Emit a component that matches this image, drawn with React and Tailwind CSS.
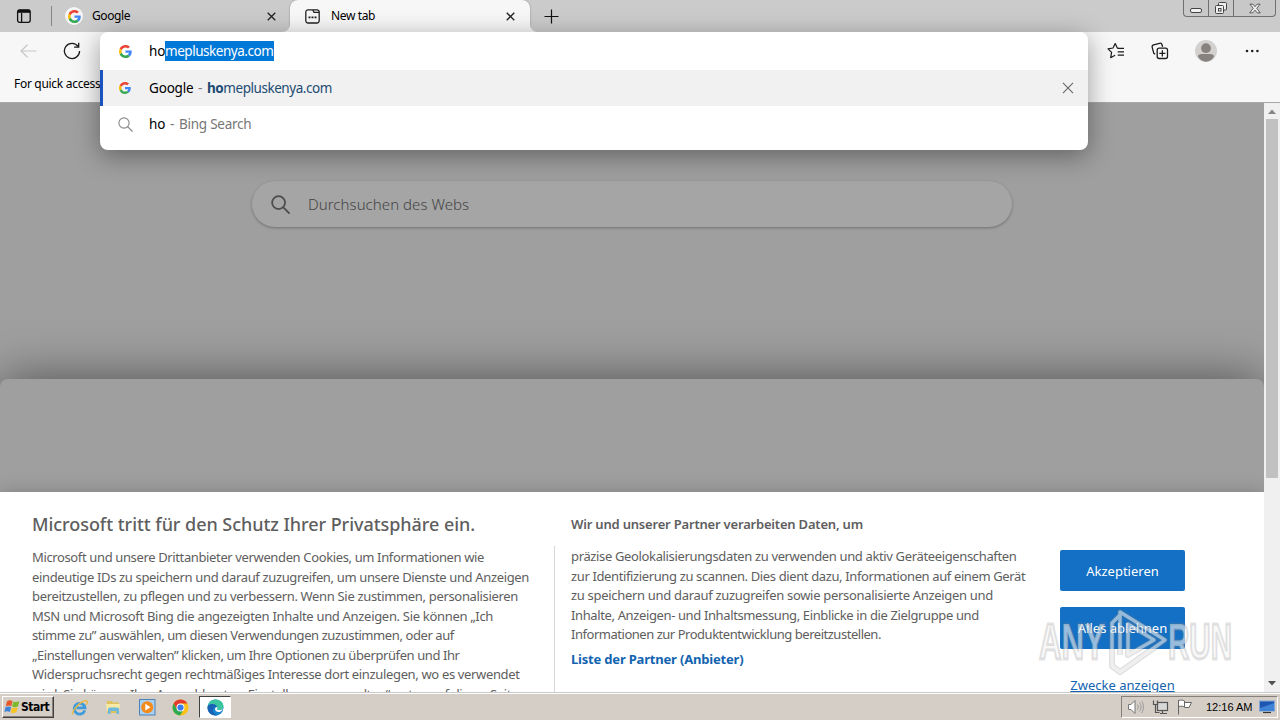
const LEFT_LINES = [
  ['Microsoft und unsere Drittanbieter verwenden Cookies, um Informationen wie', 'tracking-[-0.369px]'],
  ['eindeutige IDs zu speichern und darauf zuzugreifen, um unsere Dienste und Anzeigen', 'tracking-[-0.351px]'],
  ['bereitzustellen, zu pflegen und zu verbessern. Wenn Sie zustimmen, personalisieren', 'tracking-[-0.332px]'],
  ['MSN und Microsoft Bing die angezeigten Inhalte und Anzeigen. Sie können „Ich', 'tracking-[-0.314px]'],
  ['stimme zu” auswählen, um diesen Verwendungen zuzustimmen, oder auf', 'tracking-[-0.408px]'],
  ['„Einstellungen verwalten” klicken, um Ihre Optionen zu überprüfen und Ihr', 'tracking-[-0.415px]'],
  ['Widerspruchsrecht gegen rechtmäßiges Interesse dort einzulegen, wo es verwendet', 'tracking-[-0.346px]'],
  ['wird. Sie können Ihre Auswahl unter „Einstellungen verwalten“ unten auf dieser Seite', 'tracking-[-0.38px]'],
];

const RIGHT_LINES = [
  ['präzise Geolokalisierungsdaten zu verwenden und aktiv Geräteeigenschaften', 'tracking-[-0.355px]'],
  ['zur Identifizierung zu scannen. Dies dient dazu, Informationen auf einem Gerät', 'tracking-[-0.375px]'],
  ['zu speichern und darauf zuzugreifen sowie personalisierte Anzeigen und', 'tracking-[-0.31px]'],
  ['Inhalte, Anzeigen- und Inhaltsmessung, Einblicke in die Zielgruppe und', 'tracking-[-0.375px]'],
  ['Informationen zur Produktentwicklung bereitzustellen.', 'tracking-[-0.474px]'],
];

function GoogleIcon({ size = 14 }) {
  return (
    <svg width={size} height={size} viewBox="0 0 48 48">
      <path fill="#EA4335" d="M24 9.5c3.54 0 6.71 1.22 9.21 3.6l6.85-6.85C35.9 2.38 30.47 0 24 0 14.62 0 6.51 5.38 2.56 13.22l7.98 6.19C12.43 13.72 17.74 9.5 24 9.5z" />
      <path fill="#4285F4" d="M46.98 24.55c0-1.57-.15-3.09-.38-4.55H24v9.02h12.94c-.58 2.96-2.26 5.48-4.78 7.18l7.73 6c4.51-4.18 7.09-10.36 7.09-17.65z" />
      <path fill="#FBBC05" d="M10.53 28.59c-.48-1.45-.76-2.99-.76-4.59s.27-3.14.76-4.59l-7.98-6.19C.92 16.46 0 20.12 0 24c0 3.88.92 7.54 2.56 10.78l7.97-6.19z" />
      <path fill="#34A853" d="M24 48c6.48 0 11.93-2.13 15.89-5.81l-7.73-6c-2.15 1.45-4.92 2.3-8.16 2.3-6.26 0-11.57-4.22-13.47-9.91l-7.98 6.19C6.51 42.62 14.62 48 24 48z" />
    </svg>
  );
}

function CloseIcon({ size = 9, color = '#222', width = 1.5 }) {
  return (
    <svg width={size} height={size} viewBox="0 0 10 10" fill="none" stroke={color} strokeWidth={width}>
      <path d="M.8.8l8.4 8.4M9.2.8L.8 9.2" />
    </svg>
  );
}

function SearchIcon({ size, color, width }) {
  return (
    <svg width={size} height={size} viewBox="0 0 20 20" fill="none" stroke={color} strokeWidth={width} strokeLinecap="round">
      <circle cx="8" cy="8" r="6.8" />
      <path d="M13 13l6 6" />
    </svg>
  );
}

function TabStrip() {
  return (
    <div className="flex h-8 shrink-0 bg-[#cbcbcb] text-[12px] text-black">
      <div className="flex w-[51px] items-center pl-4">
        <svg width="16" height="16" viewBox="0 0 16 16" fill="none" stroke="#111" strokeWidth="1.3">
          <rect x="1.6" y="1.9" width="12.6" height="12.4" rx="2" />
          <path d="M1.6 4h12.6M5.6 5v9" />
          <path d="M2 3h12" strokeWidth="2.4" />
        </svg>
      </div>
      <div className="mt-1.5 h-5 w-px bg-[#858585]" />
      <div className="flex w-[238px] items-center pl-[13px]">
        <span className="flex size-[18px] items-center justify-center rounded-full bg-white/80"><GoogleIcon size={13} /></span>
        <span className="ml-[9px] w-[175px] tracking-[-0.4px] whitespace-nowrap">Google</span>
        <CloseIcon />
      </div>
      <div className="relative flex w-60 items-center rounded-t-lg bg-[#f7f7f7] pl-[15px] shadow-[0_0_2px_rgba(0,0,0,0.35)]">
        <svg className="absolute bottom-0 -left-2" width="8" height="8" viewBox="0 0 8 8">
          <path d="M8 0v8H0c4.500 0 8-3.500 8-8z" fill="#f7f7f7" />
        </svg>
        <svg className="absolute -right-2 bottom-0" width="8" height="8" viewBox="0 0 8 8">
          <path d="M0 0v8h8C3.500 8 0 4.500 0 0z" fill="#f7f7f7" />
        </svg>
        <svg width="15" height="15" viewBox="0 0 15 15" fill="none" stroke="#222" strokeWidth="1.3">
          <path d="M3.200.8h4.500l1.300 2.600h5.200v8.400a2.200 2.200 0 0 1-2.200 2.200H3a2.200 2.200 0 0 1-2.200-2.200V3A2.200 2.200 0 0 1 3.200.8zM7.700.8H12a2.200 2.200 0 0 1 2.200 2.600" />
          <path d="M3.500 8.300h2M6.500 8.300h2M9.500 8.300h2" strokeWidth="1.800" />
        </svg>
        <span className="ml-[11px] w-[175px] tracking-[-0.38px] whitespace-nowrap">New tab</span>
        <CloseIcon />
      </div>
      <div className="flex flex-1 items-center pl-3.5">
        <svg width="15" height="15" viewBox="0 0 15 15" stroke="#111" strokeWidth="1.200"><path d="M7.500.5v14M.5 7.500h14" /></svg>
      </div>
      <div className="mr-1 flex h-[17px] w-[93px] rounded-b-[4px] border border-t-0 border-[#707070] bg-[#c8c8c8]">
        <div className="flex w-[25px] items-end justify-center border-r border-[#707070] pb-[3px]">
          <div className="h-[5px] w-3 rounded-[2px] border border-[#444] bg-[#f2f2f2]" />
        </div>
        <div className="flex w-[25px] items-center justify-center border-r border-[#707070]">
          <svg width="14" height="14" viewBox="0 0 14 14" fill="#eee" stroke="#444" strokeWidth="1">
            <rect x="4.500" y="1.500" width="8" height="7.500" rx="1" />
            <rect x="1.500" y="4.500" width="8" height="8" rx="1" />
            <rect x="4.500" y="7.500" width="2.500" height="2.500" />
          </svg>
        </div>
        <div className="flex flex-1 items-center justify-center">
          <svg width="12" height="11" viewBox="0 0 13 11" fill="#eee" stroke="#444" strokeWidth=".9">
            <path d="M1 .8h3.200l2.300 2.700L8.800.8H12L8.400 5.300l3.800 4.900H9L6.500 7.300 4 10.200H.8l3.800-4.900z" />
          </svg>
        </div>
      </div>
    </div>
  );
}

function Toolbar() {
  return (
    <div className="flex h-[71px] shrink-0 flex-col border-b border-[#a8a8a8] bg-[#f7f7f7]">
      <div className="flex h-[38px] items-center">
        <svg className="ml-5" width="17" height="14" viewBox="0 0 17 14" fill="none" stroke="#c6c6c6" strokeWidth="1.200"><path d="M16.500 7H1M7.500.8L1 7l6.500 6.200" /></svg>
        <svg className="ml-[26px]" width="18" height="18" viewBox="0 0 18 18" fill="none" stroke="#1b1b1b" strokeWidth="1.300">
          <path d="M15.200 4.500A7.600 7.600 0 1 0 16.600 9" />
          <path d="M15.700.8v4.400h-4.600" />
        </svg>
        <div className="ml-auto flex items-center">
          <svg width="18" height="18" viewBox="0 0 18 18" fill="none" stroke="#1b1b1b" strokeWidth="1.200" strokeLinejoin="round">
            <path d="M11.500 6.300L10.300 6 8.200 1.500 6 6 1 6.800l3.600 3.600-.9 5.300 4.400-2.400" />
            <path d="M10.700 6.300h6.300M10.700 9.800h6.300M10.700 13.200h6.300" />
          </svg>
          <svg className="ml-[26px]" width="18" height="18" viewBox="0 0 18 18" fill="none" stroke="#1b1b1b" strokeWidth="1.300">
            <path d="M4.200 12.300L2.800 11.400 1.200 5.300a2 2 0 0 1 1.400-2.400l6-1.600A2 2 0 0 1 11 2.700l.6 2.100" />
            <rect x="6.200" y="6.200" width="10.300" height="10.300" rx="2" />
            <path d="M11.350 8.300v6.100M8.300 11.350h6.100" />
          </svg>
          <svg className="ml-[26px]" width="22" height="22" viewBox="0 0 22 22">
            <circle cx="11" cy="11" r="11" fill="#d3d1cf" />
            <circle cx="11" cy="8.200" r="4.900" fill="#87827e" />
            <path d="M3 16.500c0-1.500 1.500-2.400 3.500-2.400h9c2 0 3.500.9 3.500 2.400-1.700 3.200-4.600 5.200-8 5.200s-6.300-2-8-5.200z" fill="#87827e" />
          </svg>
          <svg className="mr-[20px] ml-7" width="15" height="4" viewBox="0 0 15 4" fill="#222">
            <circle cx="2" cy="2" r="1.300" /><circle cx="7.200" cy="2" r="1.300" /><circle cx="12.400" cy="2" r="1.300" />
          </svg>
        </div>
      </div>
      <div className="flex h-7 items-center pl-3.5 text-[12px] tracking-[-0.3px] whitespace-nowrap text-black">For quick access</div>
    </div>
  );
}

function Omnibox() {
  return (
    <div className="absolute top-8 left-[100px] z-10 h-[118px] w-[988px] overflow-hidden rounded-lg bg-white text-[13.5px] whitespace-nowrap shadow-[0_6px_26px_rgba(0,0,0,0.38)]">
      <div className="flex h-[38px] items-center pl-[19px]">
        <GoogleIcon size={13} />
        <span className="ml-[17px] w-4 text-black">ho</span>
        <span className="flex h-5 w-[109px] items-center bg-[#0078d7] tracking-[-0.47px] text-white">mepluskenya.com</span>
      </div>
      <div className="flex h-9 items-center border-l-[3px] border-[#1a53c0] bg-[#f1f1f1] pl-4">
        <GoogleIcon size={12} />
        <span className="ml-[18px] w-11 tracking-[-0.18px] text-black">Google</span>
        <span className="ml-[5px] w-[9px] text-[#767676]">-</span>
        <span className="tracking-[-0.45px] text-[#1c4b73]"><b>ho</b>mepluskenya.com</span>
        <span className="mr-3.5 ml-auto"><CloseIcon size={12} color="#666" width={0.9} /></span>
      </div>
      <div className="flex h-9 items-center pl-[18px]">
        <SearchIcon size={15} color="#8a8a8a" width={1.5} />
        <span className="ml-4 w-4 text-black">ho</span>
        <span className="ml-[5px] w-[9px] text-[#767676]">-</span>
        <span className="tracking-[-0.25px] text-[#767676]">Bing Search</span>
      </div>
    </div>
  );
}

function ConsentBanner() {
  return (
    <div className="flex h-[200px] overflow-hidden bg-white pl-8 text-[13px] text-[#5e5e5e] shadow-[0_0_18px_rgba(0,0,0,0.2)]">
      <div className="w-[522px] pt-[18px] whitespace-nowrap">
        <h2 className="h-7 text-[18px] leading-7 font-medium tracking-[-0.05px]">Microsoft tritt für den Schutz Ihrer Privatsphäre ein.</h2>
        <div className="mt-2.5 leading-[19.5px]">
          {LEFT_LINES.map(([text, tracking]) => (
            <div key={text} className={tracking}>{text}</div>
          ))}
        </div>
      </div>
      <div className="mt-[54px] w-px bg-[#d8d8d8]" />
      <div className="ml-4 w-[489px] pt-[18px] whitespace-nowrap">
        <h3 className="h-7 leading-7 font-semibold tracking-[-0.193px]">Wir und unserer Partner verarbeiten Daten, um</h3>
        <div className="mt-[9px] leading-[19.5px]">
          {RIGHT_LINES.map(([text, tracking]) => (
            <div key={text} className={tracking}>{text}</div>
          ))}
        </div>
        <div className="mt-1 leading-5 font-bold tracking-[-0.19px] text-[#1264b0]">Liste der Partner (Anbieter)</div>
      </div>
      <div className="flex w-[125px] flex-col pt-[58px] text-center whitespace-nowrap">
        <button className="h-[41px] shrink-0 rounded-[2px] bg-[#1370c5] pt-0.5 text-white">Akzeptieren</button>
        <button className="mt-4 h-[42px] shrink-0 rounded-[2px] bg-[#1370c5] pt-0.5 text-white">Alles ablehnen</button>
        <a className="mt-[27px] shrink-0 text-[#1264b0] underline">Zwecke anzeigen</a>
      </div>
    </div>
  );
}

function Scrollbar() {
  return (
    <div className="flex h-[589px] w-4 flex-col items-center bg-[#f0f0f0]">
      <svg className="mt-[6px]" width="8" height="5" viewBox="0 0 8 5" fill="#868686"><path d="M0 5l4-4.500L8 5z" /></svg>
      <div className="mt-[5px] h-[359px] w-3 bg-[#c1c1c1]" />
      <svg className="mt-auto mb-[6px]" width="8" height="5" viewBox="0 0 8 5" fill="#505050"><path d="M0 0l4 4.500L8 0z" /></svg>
    </div>
  );
}

function NewTabPage() {
  return (
    <div className="flex h-[589px] overflow-hidden">
      <div className="flex w-[1264px] flex-col overflow-hidden bg-[#9f9f9f]">
        <div className="h-[276px] shrink-0 pt-[78px]">
          <div className="ml-[252px] flex h-[46px] w-[760px] items-center rounded-full bg-[#a5a5a5] pl-[19px] text-[15px] text-[#444] shadow-[0_1px_3px_rgba(0,0,0,0.3)]">
            <SearchIcon size={19} color="#4d4d4d" width={1.9} />
            <span className="ml-[18px] font-light tracking-[0.05px]">Durchsuchen des Webs</span>
          </div>
        </div>
        <div className="h-[113px] shrink-0 rounded-t-lg bg-[#9f9f9f] shadow-[0_0_50px_rgba(0,0,0,0.5)]" />
        <ConsentBanner />
      </div>
      <Scrollbar />
    </div>
  );
}

function StartFlag() {
  return (
    <svg className="shrink-0" width="17" height="16" viewBox="0 0 17 16">
      <path d="M3 2.200c2-1.200 4-1 5.500-.2L7.300 7.200C5.600 6.300 3.700 6.300 1.800 7.300z" fill="#e8572a" />
      <path d="M9.300 2.400c2 .9 4 .8 6.200-.4L14 7.300c-2 1.100-4 1.100-5.900.2z" fill="#7cba2c" />
      <path d="M1.600 8.100c2-1 3.900-.9 5.500-.1L5.900 13c-1.700-.9-3.500-.9-5.500.1z" fill="#3f83d8" />
      <path d="M7.900 8.400c1.900.9 3.900.8 5.900-.2L12.500 13.300c-2 1-3.900 1-5.800.1z" fill="#f7c325" />
    </svg>
  );
}

function Taskbar() {
  return (
    <div className="flex h-7 shrink-0 items-center border-t border-[#c9c9c9] bg-[#d5cec7] shadow-[inset_0_1px_0_#fff]">
      <div className="mt-px ml-0.5 flex h-[22px] w-[52px] items-center border border-t-white border-r-[#404040] border-b-[#404040] border-l-white pl-px font-['DejaVu_Sans_Condensed','DejaVu_Sans',sans-serif] text-[12px] leading-4 font-bold tracking-[-0.5px] text-black shadow-[inset_-1px_-1px_0_#85807a]">
        <StartFlag />Start
      </div>
      <svg className="mt-px ml-[17px]" width="17" height="17" viewBox="0 0 17 17" fill="none">
        <path d="M13.800 11.400A5.400 5.400 0 1 1 14 8.900H5.300" stroke="#3f9bdc" strokeWidth="2.800" />
        <path d="M2 14.700C-.8 17 5 4.500 14.200 1.700c3-.6 2.100 2.400 1 4.100" stroke="#e9b93c" strokeWidth="1.300" />
      </svg>
      <svg className="mt-px ml-[17px]" width="17" height="16" viewBox="0 0 17 16">
        <path d="M2 2h5l1 1.500h6V14H2z" fill="#e0c25c" />
        <path d="M1 5h14l-1 7H2z" fill="#f8e9a4" />
        <path d="M3 15V10.500a2 2 0 0 1 2-2h7a2 2 0 0 1 2 2V15h-2.500v-3h-6v3z" fill="#6db9de" />
      </svg>
      <svg className="mt-px ml-[17px]" width="17" height="17" viewBox="0 0 17 17">
        <rect x=".5" y=".5" width="15.500" height="15.500" fill="#a9d0f0" stroke="#4d83b8" />
        <circle cx="8.200" cy="8.200" r="6" fill="#f28a1c" />
        <path d="M6.300 4.800l5.200 3.400-5.200 3.400z" fill="#fff" />
      </svg>
      <svg className="mt-px ml-4" width="17" height="17" viewBox="0 0 17 17">
        <circle cx="8.500" cy="8.500" r="8" fill="#fbc116" />
        <path d="M8.500 4.500h6.900a8 8 0 0 0-13.800 0l3.400 6z" fill="#e33b2e" />
        <path d="M1.600 4.500a8 8 0 0 0 6.500 12l3.500-6-6.600 0z" fill="#2da94f" />
        <circle cx="8.500" cy="8.500" r="4" fill="#fff" />
        <circle cx="8.500" cy="8.500" r="3.100" fill="#3b7ded" />
      </svg>
      <div className="mt-px ml-2.5 flex h-[22px] w-8 items-center justify-center border border-t-[#404040] border-r-white border-b-white border-l-[#404040] bg-white">
        <svg width="17" height="17" viewBox="0 0 17 17">
          <circle cx="8.500" cy="8.500" r="8" fill="#1784d0" />
          <path d="M.6 7.500C1.500 3 5 .5 8.700.5c4.500 0 7.800 3.200 7.800 6.700 0 2.400-1.900 3.900-4.200 3.900-1.500 0-2.600-.5-2.300-1 .5-.8.5-1.400.2-2.200C9.500 6 7.300 5 5.200 5 3 5 1.400 6 .6 7.500z" fill="#3cc6a0" />
          <path d="M.6 7.500C1.400 6 3 5 5.200 5c2.100 0 4.300 1 5 2.900C8 7 6 8.500 6 11c0 2.500 1.800 4.500 4.500 5.200C5 17.500-.3 13.500.6 7.500z" fill="#1a62b5" />
          <path d="M10.200 7.900c.3.800.3 1.400-.2 2.200-.3.500.8 1 2.300 1 1.400 0 2.800-.5 3.600-1.600-.4 2-1.600 3-3.400 3.400-2.500.4-4.900-1-4.400-3.300.2-.9 1-1.600 2.100-1.700z" fill="#fff" />
        </svg>
      </div>
      <div className="mt-px mr-0.5 ml-auto flex h-[22px] w-[157px] items-center border border-t-[#85807a] border-r-white border-b-white border-l-[#85807a] pl-[5px] font-['Liberation_Sans',sans-serif] text-[11px] whitespace-nowrap text-black">
        <svg width="18" height="16" viewBox="0 0 18 16" fill="none" stroke="#777" strokeWidth="1">
          <path d="M1.500 5.500h2.500l4-4v13l-4-4H1.500z" fill="#fff" />
          <path d="M10.500 5.500c1 1.500 1 3.500 0 5M12.500 3.500c2 2.500 2 6.500 0 9M14.700 2c2.300 3.500 2.300 8.500 0 12" stroke="#999" />
        </svg>
        <svg className="ml-[7px]" width="17" height="16" viewBox="0 0 17 16" fill="#fff" stroke="#555" strokeWidth="1.200">
          <rect x="5.500" y="3.500" width="10" height="8" fill="#d8d8d8" />
          <path d="M8 14.500h7M10.500 12v2" />
          <path d="M1.500 1.500v4h4v-4M3.500 5.500v8h4" fill="none" />
        </svg>
        <svg className="ml-[8px]" width="16" height="16" viewBox="0 0 16 16" fill="#fff" stroke="#666" strokeWidth="1">
          <path d="M1.500 1v14.500M2 1.500c2-.8 4-.6 5.500.5v6c-1.800-1-3.500-1-5.500-.5M7.500 3.500h7L12 8.500H7.500" />
        </svg>
        <span className="ml-[13px] w-[53px]">12:16 AM</span>
        <svg width="17" height="14" viewBox="0 0 17 14">
          <rect x=".5" y="1" width="15" height="10" fill="#1d56b0" stroke="#7fa6d6" />
          <path d="M1 8l14-5v8H1z" fill="#3f83d6" />
          <path d="M4 12.500h8" stroke="#333" strokeWidth="1.200" />
        </svg>
      </div>
    </div>
  );
}

function Watermark() {
  return (
    <svg className="absolute top-[605px] left-[1030px] z-20" width="220" height="72" viewBox="-4 0 220 72" fontFamily="Liberation Sans, sans-serif" fontSize="50" fontWeight="bold">
      <g fill="#f4f4f4" fillOpacity=".6" stroke="#808080" strokeOpacity=".22" strokeWidth="3">
        <text x="5" y="54" textLength="66" lengthAdjust="spacingAndGlyphs">ANY</text>
        <text x="134" y="54" textLength="64" lengthAdjust="spacingAndGlyphs">RUN</text>
      </g>
      <g fill="none" strokeLinejoin="round">
        <path d="M86 50V7l45 28-45 32-8-6V18l8-8M94 19v31l26-15z" stroke="#808080" strokeOpacity=".25" strokeWidth="6" />
        <path d="M86 50V7l45 28-45 32-8-6V18l8-8M94 19v31l26-15z" stroke="#fff" strokeOpacity=".5" strokeWidth="3.500" />
      </g>
    </svg>
  );
}

export default function App() {
  return (
    <div className="relative flex h-[720px] w-[1280px] flex-col overflow-hidden font-['Noto_Sans',sans-serif]">
      <TabStrip />
      <Toolbar />
      <NewTabPage />
      <Taskbar />
      <Omnibox />
      <Watermark />
    </div>
  );
}
